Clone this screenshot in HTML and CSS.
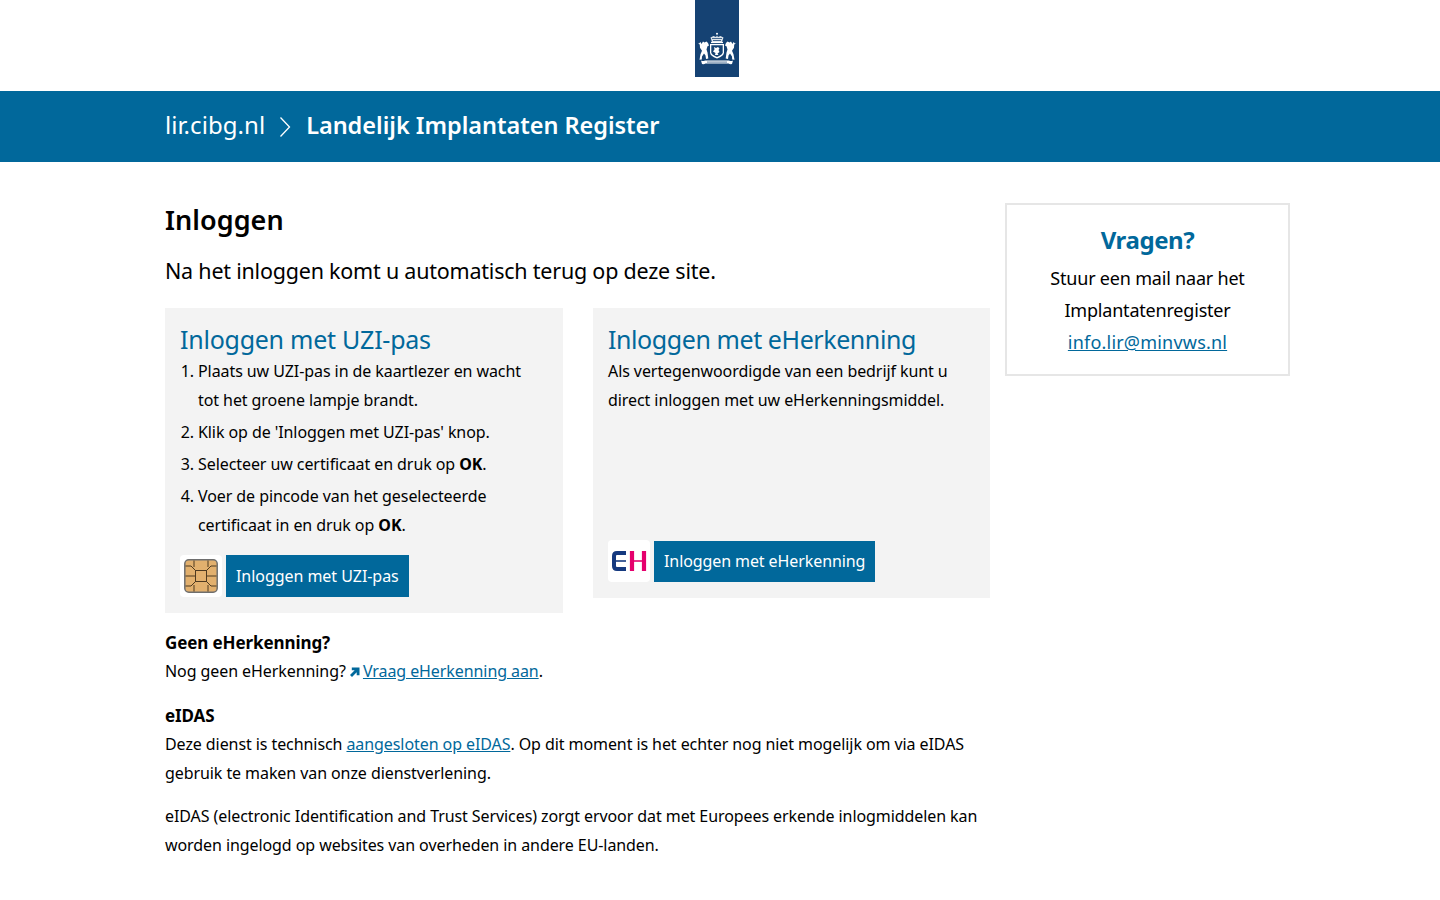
FILE: index.html
```html
<!DOCTYPE html>
<html lang="nl">
<head>
<meta charset="utf-8">
<title>Inloggen</title>
<link rel="stylesheet" href="styles.css">
</head>
<body>
<header class="top">
  <div class="logo">
    <svg width="44" height="77" viewBox="0 0 44 77" aria-hidden="true">
      <rect width="44" height="77" fill="#154273"/>
      <g fill="#fff">
        <circle cx="22" cy="33.800" r="1"/>
        <path d="M17 42l-1.500-4.500 3-1.500 2.500 1 1-1.500 1 1.500 2.500-1 3 1.500-1.500 4.500z" fill-opacity=".85"/>
        <rect x="16" y="41.800" width="12" height="1.300"/>
        <path d="M15 44h14v8.500q0 3.500-7 6q-7-2.500-7-6z"/>
        <path d="M3.500 44l2-2 1 2 1.500-2.500 1.500 1 2-1 1.500 1.500 1 2.500-1.500.7-1 3.300 1 3 .8 6-2.300.5-.5-3.500-1.500-2-2 3-.2 3-2.300.2 1-5.500 1.500-3.500-2-3-.2-3-1.800-2z"/>
        <path d="M40.500 44l-2-2-1 2-1.500-2.500-1.500 1-2-1-1.500 1.500-1 2.500 1.500.7 1 3.300-1 3-.8 6 2.300.5.500-3.500 1.500-2 2 3 .2 3 2.300.2-1-5.500-1.500-3.500 2-3 .2-3 1.800-2z"/>
        <path d="M6 60.500q2 1 4 0h24q2 1 4 0l-1 3.500q-2 .5-3.500-.5h-23q-1.500 1-3.500 .5z"/>
      </g>
      <g fill="#154273">
        <path d="M17 38h10v.8H17zM18 40h8v.8h-8z"/>
        <path d="M16.300 45.300h11.400v7q0 2.500-5.700 4.700q-5.700-2.200-5.700-4.700z"/>
        <path d="M12 61.700h20v.7H12z"/>
      </g>
      <path d="M19 47l2 1 2-1 1.500 1.500-1 1.500 1 2-2 1.500 1 1.500h-3.500l.5-2-2.500-1.500 1.500-2z" fill="#fff"/>
    </svg>
  </div>
</header>
<nav class="bar">
  <div class="bar-in">
    <span class="site">lir.cibg.nl</span>
    <svg class="chev" width="12" height="22" viewBox="0 0 12 22" aria-hidden="true"><path d="M1.500 1.500L10.500 11L1.500 20.500" fill="none" stroke="#fff" stroke-width="1.300"/></svg>
    <span class="app">Landelijk Implantaten Register</span>
  </div>
</nav>
<div class="page">
  <main class="main">
    <h1>Inloggen</h1>
    <p class="lead">Na het inloggen komt u automatisch terug op deze site.</p>
    <div class="cards">
      <section class="card card-uzi">
        <h2>Inloggen met UZI-pas</h2>
        <ol>
          <li>Plaats uw UZI-pas in de kaartlezer en wacht tot het groene lampje brandt.</li>
          <li>Klik op de 'Inloggen met UZI-pas' knop.</li>
          <li>Selecteer uw certificaat en druk op <strong>OK</strong>.</li>
          <li>Voer de pincode van het geselecteerde certificaat in en druk op <strong>OK</strong>.</li>
        </ol>
        <div class="action">
          <span class="ico">
            <svg width="34" height="34" viewBox="0 0 34 34" aria-hidden="true">
              <rect x=".8" y=".8" width="32.400" height="32.400" rx="4" fill="#e2b06e" stroke="#6e6e6e" stroke-width="1.500"/>
              <g fill="none" stroke="#4f3a20" stroke-width="1">
                <rect x="11.500" y="11.500" width="11" height="11"/>
                <path d="M1.500 7H7l4.500 4.500M32.500 7H27l-4.500 4.500M1.500 27H7l4.500-4.500M32.500 27H27l-4.500-4.500M1.500 17h10M32.500 17h-10M10 1.500V8M24 1.500V8M10 32.500V26M24 32.500V26"/>
              </g>
            </svg>
          </span>
          <a class="btn" href="#">Inloggen met UZI-pas</a>
        </div>
      </section>
      <section class="card card-short">
        <h2>Inloggen met eHerkenning</h2>
        <p class="card-text">Als vertegenwoordigde van een bedrijf kunt u direct inloggen met uw eHerkenningsmiddel.</p>
        <div class="action action-e">
          <span class="ico">
            <svg width="36" height="20" viewBox="0 0 36 20" aria-hidden="true">
              <path d="M15 2H6Q3 2 3 5V15Q3 18 6 18H15" fill="none" stroke="#15397f" stroke-width="4"/>
              <path d="M5 10H15" fill="none" stroke="#15397f" stroke-width="1.600"/>
              <path d="M21 0V20M33 0V20" fill="none" stroke="#e5006d" stroke-width="4.200"/>
              <path d="M22 10H32" fill="none" stroke="#e5006d" stroke-width="1.600"/>
            </svg>
          </span>
          <a class="btn" href="#">Inloggen met eHerkenning</a>
        </div>
      </section>
    </div>
    <h3>Geen eHerkenning?</h3>
    <p class="para">Nog geen eHerkenning? <svg class="ext" width="10" height="10" viewBox="0 0 10 10" aria-hidden="true"><path d="M2 10L0 8 4.700 3.300H1.800V.5H9.500V8.200H6.700V5.300z" fill="#01689b"/></svg> <a href="#">Vraag eHerkenning aan</a>.</p>
    <h3 class="h-eidas">eIDAS</h3>
    <p class="para">Deze dienst is technisch <a href="#">aangesloten op eIDAS</a>. Op dit moment is het echter nog niet mogelijk om via eIDAS gebruik te maken van onze dienstverlening.</p>
    <p class="para para-last">eIDAS (electronic Identification and Trust Services) zorgt ervoor dat met Europees erkende inlogmiddelen kan worden ingelogd op websites van overheden in andere EU-landen.</p>
  </main>
  <aside class="aside">
    <h2>Vragen?</h2>
    <p>Stuur een mail naar het Implantatenregister <a href="#">info.lir@minvws.nl</a></p>
  </aside>
</div>
</body>
</html>
```
FILE: styles.css
```css
* { box-sizing: border-box; }
html, body { margin: 0; padding: 0; }
body {
  font-family: "Noto Sans", "Open Sans", sans-serif;
  font-size: 16px;
  line-height: 29px;
  color: #000;
  background: #fff;
}
a { color: #01689b; }
.top { height: 91px; display: flex; justify-content: center; }
.logo { height: 77px; margin-left: -6px; }
.logo svg { display: block; }
.bar { height: 71px; background: #01689b; color: #fff; }
.bar-in { display: flex; align-items: center; height: 100%; padding: 0 0 4px 165px; }
.site { font-size: 24px; line-height: 30px; letter-spacing: .05px; }
.chev { margin: 4px 15px 0 14px; }
.app { font-size: 23.500px; line-height: 30px; font-weight: 600; letter-spacing: -.03px; }
.page { display: flex; gap: 15px; margin: 0 150px 0 165px; padding-top: 41px; align-items: flex-start; }
.main { width: 825px; flex: none; }
h1 { margin: -1px 0 0; font-size: 27px; line-height: 36px; font-weight: 600; letter-spacing: .05px; }
.lead { margin: 17px 0 0; font-size: 21.500px; line-height: 32px; letter-spacing: -.22px; }
.cards { display: flex; gap: 30px; margin-top: 21px; align-items: flex-start; }
.card { background: #f3f3f3; padding: 15px; display: flex; flex-direction: column; }
.card-uzi { flex: none; width: 398px; min-height: 305px; }
.card-short { flex: 1 1 0; min-height: 290px; padding-bottom: 16px; }
.card h2 { margin: 0 0 2px; font-size: 25px; line-height: 32px; font-weight: 400; color: #01689b; letter-spacing: -.25px; }
.card-short h2 { letter-spacing: -.42px; }
.card ol { margin: 0; padding: 0 15px 0 18px; font-size: 16px; letter-spacing: -.08px; }
.card li { margin-bottom: 3px; }
.card-text { margin: 0; font-size: 16px; letter-spacing: -.08px; }
.action { display: flex; gap: 4px; align-items: stretch; margin-top: 12px; }
.action-e { margin-top: auto; }
.ico { width: 42px; height: 42px; background: #fff; border-radius: 4px; display: flex; align-items: center; justify-content: center; }
.btn { background: #01689b; color: #fff; text-decoration: none; font-size: 16px; line-height: 42px; padding: 0 10px; letter-spacing: -.05px; }
.action-e .btn { line-height: 41px; margin-top: 1px; letter-spacing: -.09px; }
h3 { margin: 16px 0 0; font-size: 17px; line-height: 28px; font-weight: 700; letter-spacing: -.1px; }
.para { margin: 0; font-size: 16px; letter-spacing: -.08px; }
.h-eidas { margin-top: 16px; }
.para-last { margin-top: 14px; }
.ext { vertical-align: 0; margin: 0 -1px 0 0; }
.aside { width: 285px; flex: none; border: 2px solid #e6e6e6; padding: 17px 20px 16px; text-align: center; }
.aside h2 { margin: 0 0 4px; font-size: 24px; line-height: 36px; font-weight: 700; color: #01689b; letter-spacing: -.4px; }
.aside p { margin: 0; font-size: 18px; line-height: 32px; letter-spacing: -.2px; }
.aside a { letter-spacing: .2px; }
```
